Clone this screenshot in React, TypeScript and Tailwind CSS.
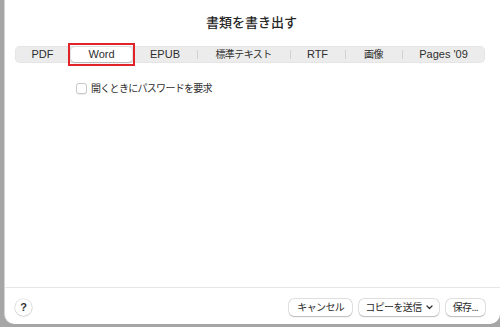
const font = { fontFamily: '"Liberation Sans", "Noto Sans CJK JP", sans-serif' }

const tabs = [
  { label: 'PDF', w: 'w-[55px]' },
  { label: 'Word', w: 'w-[63px]', active: true },
  { label: 'EPUB', w: 'w-[64px]' },
  { label: '標準テキスト', w: 'w-[93px]', jp: true },
  { label: 'RTF', w: 'w-[55px]' },
  { label: '画像', w: 'w-[57px]', jp: true },
  { label: "Pages '09", w: 'w-[83px]' },
]

function Button({ children, className = 'px-2' }: { children: React.ReactNode; className?: string }) {
  return (
    <button className={`h-[17px] rounded-[5px] bg-white ${className} text-[10px] leading-none tracking-[-0.6px] text-[#2a2a2a] shadow-[0_0_0_0.5px_rgba(0,0,0,0.18),0_0.5px_1.5px_rgba(0,0,0,0.2)] flex items-center`}>
      {children}
    </button>
  )
}

export default function App() {
  return (
    <div className="w-[500px] h-[327px] bg-[#a6a6a6] overflow-hidden" style={font}>
      <div className="ml-[4px] w-[496px] h-[324px] bg-white border-l border-[#d4d4d4] rounded-bl-[10px] rounded-br-[10px] flex flex-col">
        <h1 className="pt-[15px] h-[31px] text-center text-[13px] leading-[16px] font-medium text-[#262626] pr-[2px]">
          書類を書き出す
        </h1>

        <div className="mt-[15px] ml-[10px] w-[470px] h-[17px] rounded-[5px] bg-[#ececec] shadow-[inset_0_0_0_0.5px_rgba(0,0,0,0.06)] flex">
          {tabs.map((t, i) => {
            const sep = i > 2
            return (
              <div key={t.label} className={`${t.w} relative flex items-center justify-center`}>
                {sep && <span className="absolute left-0 top-[4px] h-[9px] w-px bg-[#d2d2d2]" />}
                {t.active ? (
                  <>
                    <div className="absolute inset-[1px] rounded-[4px] bg-white shadow-[0_0.5px_1.5px_rgba(0,0,0,0.22)]" />
                    <div className="absolute -left-[2px] -right-[2px] -top-[3px] -bottom-[3px] border-2 border-[#e0242a]" />
                  </>
                ) : null}
                <span className={`relative text-[#2e2e2e] leading-none ${t.jp ? 'text-[10px] tracking-[-0.6px]' : 'text-[11px]'}`}>
                  {t.label}
                </span>
              </div>
            )
          })}
        </div>

        <label className="mt-[20px] ml-[71px] flex items-center gap-[4px]">
          <span className="w-[11px] h-[11px] rounded-[3px] bg-white border border-[#c9c9c9] shadow-[0_0.5px_1px_rgba(0,0,0,0.08)]" />
          <span className="text-[10px] leading-none tracking-[-0.7px] text-[#2e2e2e]">開くときにパスワードを要求</span>
        </label>

        <div className="flex-1" />

        <div className="h-[37px] border-t border-[#e6e6e6] flex items-start pt-[11px] pl-[10px] pr-[15px]">
          <button className="w-[17px] h-[17px] rounded-full bg-white shadow-[0_0_0_0.5px_rgba(0,0,0,0.15),0_0.5px_1.5px_rgba(0,0,0,0.2)] flex items-center justify-center text-[11px] font-bold text-[#333]">
            ?
          </button>
          <div className="flex-1" />
          <div className="flex gap-[7px]">
            <Button>キャンセル</Button>
            <Button className="px-[6px]">
              コピーを送信
              <svg width="7" height="5" viewBox="0 0 7 5" className="ml-[4px]">
                <path d="M1 1 L3.5 3.5 L6 1" fill="none" stroke="#333" strokeWidth="1.3" strokeLinecap="round" strokeLinejoin="round" />
              </svg>
            </Button>
            <Button className="px-[7px]">保存...</Button>
          </div>
        </div>
      </div>
    </div>
  )
}
